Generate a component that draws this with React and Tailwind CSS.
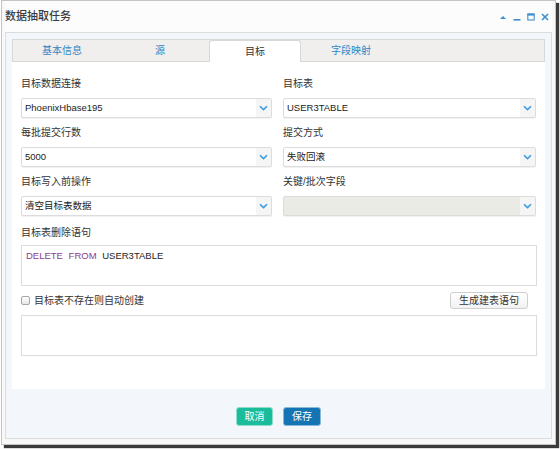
import React from 'react';

const Chevron = () => (
  <svg width="9" height="6" viewBox="0 0 9 6" className="text-[#3d9be0]">
    <path d="M1 1.2 L4.5 4.6 L8 1.2" fill="none" stroke="currentColor" strokeWidth="1.6" />
  </svg>
);

const Select = ({ value, disabled }) => (
  <div
    className={`flex h-[20px] items-stretch rounded-[2px] border border-[#dcdcdc] shadow-[0_1px_1px_rgba(0,0,0,0.06)] ${
      disabled ? 'bg-[#ebebe5]' : 'bg-white'
    }`}
  >
    <div className="flex flex-1 items-center pl-[3px] text-[9.5px] text-[#222]">{value}</div>
    <div className="flex w-[15px] items-center justify-center bg-[#f5f5f5]">
      <Chevron />
    </div>
  </div>
);

const Field = ({ label, value, disabled, className = '' }) => (
  <div className={className}>
    <div className="mb-[7px] h-[14px] leading-[14px] text-[10px] text-[#333]">{label}</div>
    <Select value={value} disabled={disabled} />
  </div>
);

const tabs = [
  { name: '基本信息', w: 'w-[98px]' },
  { name: '源', w: 'w-[98px]' },
  { name: '目标', w: 'w-[92px]', active: true },
  { name: '字段映射', w: 'w-[100px]' },
];

export default function App() {
  return (
    <div className="h-[449px] w-[560px] overflow-hidden bg-white pl-[1px] font-['Liberation_Sans','Noto_Sans_CJK_SC',sans-serif]">
      <div className="flex w-[555px] flex-col border border-[#c4c4c4] bg-[#f8f8f8] px-[3px] pb-[5px] shadow-[3px_3px_1px_#3a3a3a]">
        {/* header */}
        <div className="flex h-[31px] items-center justify-between bg-[#fcfcfc]">
          <span className="text-[11px] font-medium text-[#3a3a3a]">数据抽取任务</span>
          <div className="flex items-center gap-[6px] pr-[3px] text-[#3f8fcf]">
            <svg width="8" height="8" viewBox="0 0 8 8">
              <path d="M1 6 L4 3 L7 6 Z" fill="currentColor" />
            </svg>
            <svg width="8" height="8" viewBox="0 0 8 8">
              <rect x="0.5" y="6" width="7" height="1.6" fill="currentColor" />
            </svg>
            <svg width="8" height="8" viewBox="0 0 8 8">
              <rect x="0.8" y="1" width="6.4" height="6" fill="none" stroke="currentColor" strokeWidth="1.1" />
              <rect x="0.5" y="0.6" width="7" height="2" fill="currentColor" />
            </svg>
            <svg width="8" height="8" viewBox="0 0 8 8">
              <path d="M1 1 L7 7 M7 1 L1 7" stroke="currentColor" strokeWidth="1.7" />
            </svg>
          </div>
        </div>

        {/* inner panel */}
        <div className="border border-[#dcdcdc] bg-[#f3f7fb] px-[6px] pt-[6px]">
          {/* tab bar */}
          <div className="flex h-[23px] items-end border border-[#d8d8d8] bg-[#f0efed]">
            {tabs.map(t =>
              t.active ? (
                <div
                  key={t.name}
                  className={`${t.w} -mb-px flex h-[22px] items-center justify-center rounded-t-[3px] border border-b-0 border-[#d8d8d8] bg-white text-[10px] text-[#333]`}
                >
                  {t.name}
                </div>
              ) : (
                <div key={t.name} className={`${t.w} flex h-[21px] items-center justify-center text-[10px] text-[#2f86c6]`}>
                  {t.name}
                </div>
              )
            )}
          </div>

          {/* form */}
          <div className="bg-white px-[9px] pb-[33px] pt-[15px]">
            <div className="grid grid-cols-[251px_253px] gap-x-[11px]">
              <Field label="目标数据连接" value="PhoenixHbase195" />
              <Field label="目标表" value="USER3TABLE" />
              <Field label="每批提交行数" value="5000" className="mt-[8px]" />
              <Field label="提交方式" value="失败回滚" className="mt-[8px]" />
              <Field label="目标写入前操作" value="清空目标表数据" className="mt-[8px]" />
              <Field label="关键/批次字段" value="" disabled className="mt-[8px]" />
            </div>

            <div className="mt-[10px] h-[14px] leading-[14px] text-[10px] text-[#333]">目标表删除语句</div>
            <div className="mt-[5px] h-[41px] w-[516px] border border-[#dcdcdc] bg-white px-[4px] pt-[4px] text-[9.5px] leading-[12px] [word-spacing:3px]">
              <span className="text-[#8e3b8e]">DELETE FROM</span> <span className="text-[#222]">USER3TABLE</span>
            </div>

            <div className="mt-[6px] flex h-[17px] w-[516px] items-center justify-between">
              <label className="flex items-center gap-[4px] text-[10px] text-[#333]">
                <span className="h-[9px] w-[9px] rounded-[2px] border border-[#a8a8a8] bg-gradient-to-b from-white to-[#e6e6e6]" />
                目标表不存在则自动创建
              </label>
              <button className="mr-[9px] h-[17px] w-[78px] rounded-[3px] border border-[#cfcfcf] bg-gradient-to-b from-white to-[#f2f2f2] text-[10px] text-[#333]">
                生成建表语句
              </button>
            </div>

            <div className="mt-[6px] h-[41px] w-[516px] border border-[#dcdcdc] bg-white" />
          </div>

          {/* footer */}
          <div className="flex justify-center gap-[10px] pb-[12px] pt-[18px]">
            <button className="h-[19px] w-[37px] rounded-[3px] border border-[#8fdcc9] bg-[#1bbc9b] text-[10px] text-white">
              取消
            </button>
            <button className="h-[19px] w-[38px] rounded-[3px] border border-[#8bb8d8] bg-[#1574b3] text-[10px] text-white">
              保存
            </button>
          </div>
        </div>
      </div>
    </div>
  );
}
